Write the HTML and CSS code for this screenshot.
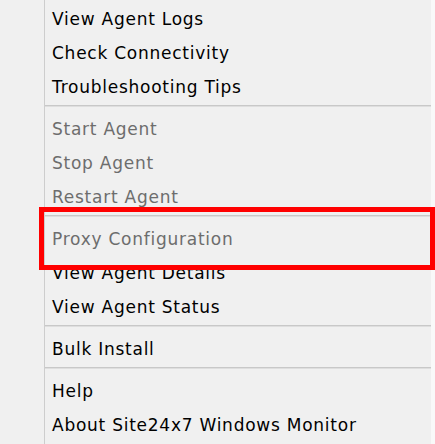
FILE: index.html
```html
<!DOCTYPE html>
<html lang="en">
<head>
    <meta charset="UTF-8">
    <meta name="viewport" content="width=device-width, initial-scale=1.0">
    <title>Agent Menu</title>
    <link rel="stylesheet" href="styles.css">
</head>
<body>
    <div class="menu">
        <div class="gutter"></div>
        <ul class="list">
            <li class="item">View Agent Logs</li>
            <li class="item">Check Connectivity</li>
            <li class="item">Troubleshooting Tips</li>
            <li class="sep"></li>
            <li class="item disabled">Start Agent</li>
            <li class="item disabled">Stop Agent</li>
            <li class="item disabled">Restart Agent</li>
            <li class="sep"></li>
            <li class="item disabled">Proxy Configuration</li>
            <li class="item">View Agent Details</li>
            <li class="item">View Agent Status</li>
            <li class="sep"></li>
            <li class="item">Bulk Install</li>
            <li class="sep"></li>
            <li class="item">Help</li>
            <li class="item">About Site24x7 Windows Monitor</li>
        </ul>
    </div>
    <!-- highlight box drawn over the menu -->
    <div class="highlight"></div>
</body>
</html>
```

FILE: styles.css
```css
/* Page */
body {
    margin: 0;
    height: 100vh;
    background: #f9f9f9;
    font-family: "DejaVu Sans", Verdana, sans-serif;
    position: relative;
    overflow: hidden;
}
/* Context menu */
.menu {
    display: flex;
    width: 431px;
    height: 100%;
    background: #f0f0f0;
}
.gutter {
    width: 44px;
    flex-shrink: 0;
}
.list {
    list-style: none;
    margin: 0;
    padding: 0;
    flex: 1;
    border-left: 1px solid #cdcdcd;
}
.item {
    box-sizing: border-box;
    height: 34px;
    display: flex;
    align-items: center;
    padding: 3px 0 0 7px;
    font-size: 17px;
    letter-spacing: 0.75px;
    color: #000;
    white-space: nowrap;
}
.item.disabled {
    color: #6d6d6d;
}
/* Separator lines */
.sep {
    height: 8px;
    display: flex;
    flex-direction: column;
    justify-content: center;
}
.sep::before {
    content: "";
    height: 1px;
    background: #c8c8c8;
}
.sep::after {
    content: "";
    height: 1px;
    background: #dedede;
}
/* Red annotation box */
.highlight {
    position: absolute;
    left: 39px;
    top: 207px;
    width: 386px;
    height: 53px;
    border: 5px solid #ff0000;
}
```
